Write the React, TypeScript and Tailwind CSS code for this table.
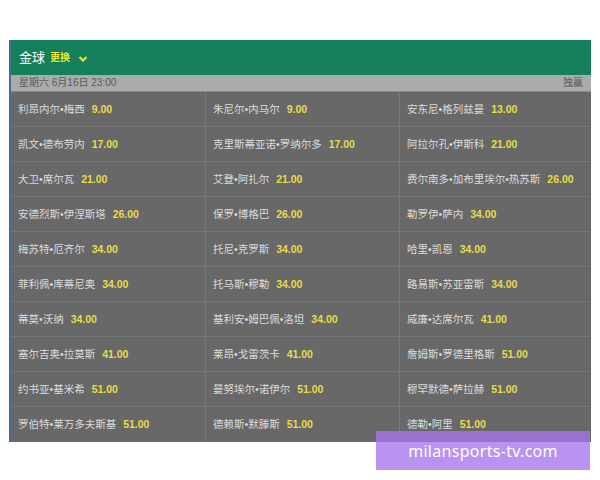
import React from "react";

const rows: [string, string][][] = [
  [["利昂内尔•梅西", "9.00"], ["朱尼尔•内马尔", "9.00"], ["安东尼•格列兹曼", "13.00"]],
  [["凯文•德布劳内", "17.00"], ["克里斯蒂亚诺•罗纳尔多", "17.00"], ["阿拉尔孔•伊斯科", "21.00"]],
  [["大卫•席尔瓦", "21.00"], ["艾登•阿扎尔", "21.00"], ["费尔南多•加布里埃尔•热苏斯", "26.00"]],
  [["安德烈斯•伊涅斯塔", "26.00"], ["保罗•博格巴", "26.00"], ["勒罗伊•萨内", "34.00"]],
  [["梅苏特•厄齐尔", "34.00"], ["托尼•克罗斯", "34.00"], ["哈里•凯恩", "34.00"]],
  [["菲利佩•库蒂尼奥", "34.00"], ["托马斯•穆勒", "34.00"], ["路易斯•苏亚雷斯", "34.00"]],
  [["蒂莫•沃纳", "34.00"], ["基利安•姆巴佩•洛坦", "34.00"], ["威廉•达席尔瓦", "41.00"]],
  [["塞尔吉奥•拉莫斯", "41.00"], ["莱昂•戈雷茨卡", "41.00"], ["詹姆斯•罗德里格斯", "51.00"]],
  [["约书亚•基米希", "51.00"], ["曼努埃尔•诺伊尔", "51.00"], ["穆罕默德•萨拉赫", "51.00"]],
  [["罗伯特•莱万多夫斯基", "51.00"], ["德赖斯•默滕斯", "51.00"], ["德勒•阿里", "51.00"]],
];

export default function App() {
  return (
    <div
      className="relative w-[600px] h-[480px] bg-white"
      style={{ fontFamily: '"Liberation Sans", "Noto Sans CJK SC", sans-serif' }}
    >
      <div className="pt-[40px] pl-[9px]">
        <div className="w-[582px] border-l-2 border-[#4a6a9a]">
          <div className="h-[35px] bg-[#16805a] flex items-center pl-[8px] gap-[5px]">
            <span className="text-[13px] text-white leading-none">金球</span>
            <span className="text-[10px] font-bold text-[#e4e83a] leading-none">更换</span>
            <svg width="10" height="8" viewBox="0 0 10 8" className="ml-[3px] mt-[2px]">
              <path d="M1.5 2 L5 5.5 L8.5 2" stroke="#e4e83a" strokeWidth="2" fill="none" />
            </svg>
          </div>
          <div className="h-[17px] bg-[#ababab] border-b border-[#8a8a8a] flex items-center justify-between px-[8px]">
            <span className="text-[10px] text-[#5a5a5a] leading-none">星期六 6月16日 23:00</span>
            <span className="text-[10px] text-[#5a5a5a] leading-none">独赢</span>
          </div>
          <div className="bg-[#686868]">
            {rows.map((row, i) => (
              <div key={i} className="grid grid-cols-[195px_194px_1fr] h-[35px] border-b border-[#747474] last:border-b-0">
                {row.map(([name, odd], j) => (
                  <div
                    key={j}
                    className={`flex items-center pl-[7px] gap-[7px] ${j < 2 ? "border-r border-[#777777]" : ""}`}
                  >
                    <span className="text-[10.5px] text-[#dcdcdc] leading-none whitespace-nowrap">{name}</span>
                    <span className="text-[10.5px] font-bold text-[#e8dc4a] leading-none">{odd}</span>
                  </div>
                ))}
              </div>
            ))}
          </div>
        </div>
      </div>
      <div className="absolute left-[376px] top-[431px] w-[214px] h-[39px] bg-[rgba(165,115,238,0.78)] flex items-center justify-center">
        <span className="text-[16px] text-white tracking-[0.3px]" style={{ fontFamily: '"Noto Sans", sans-serif' }}>milansports-tv.com</span>
      </div>
    </div>
  );
}
